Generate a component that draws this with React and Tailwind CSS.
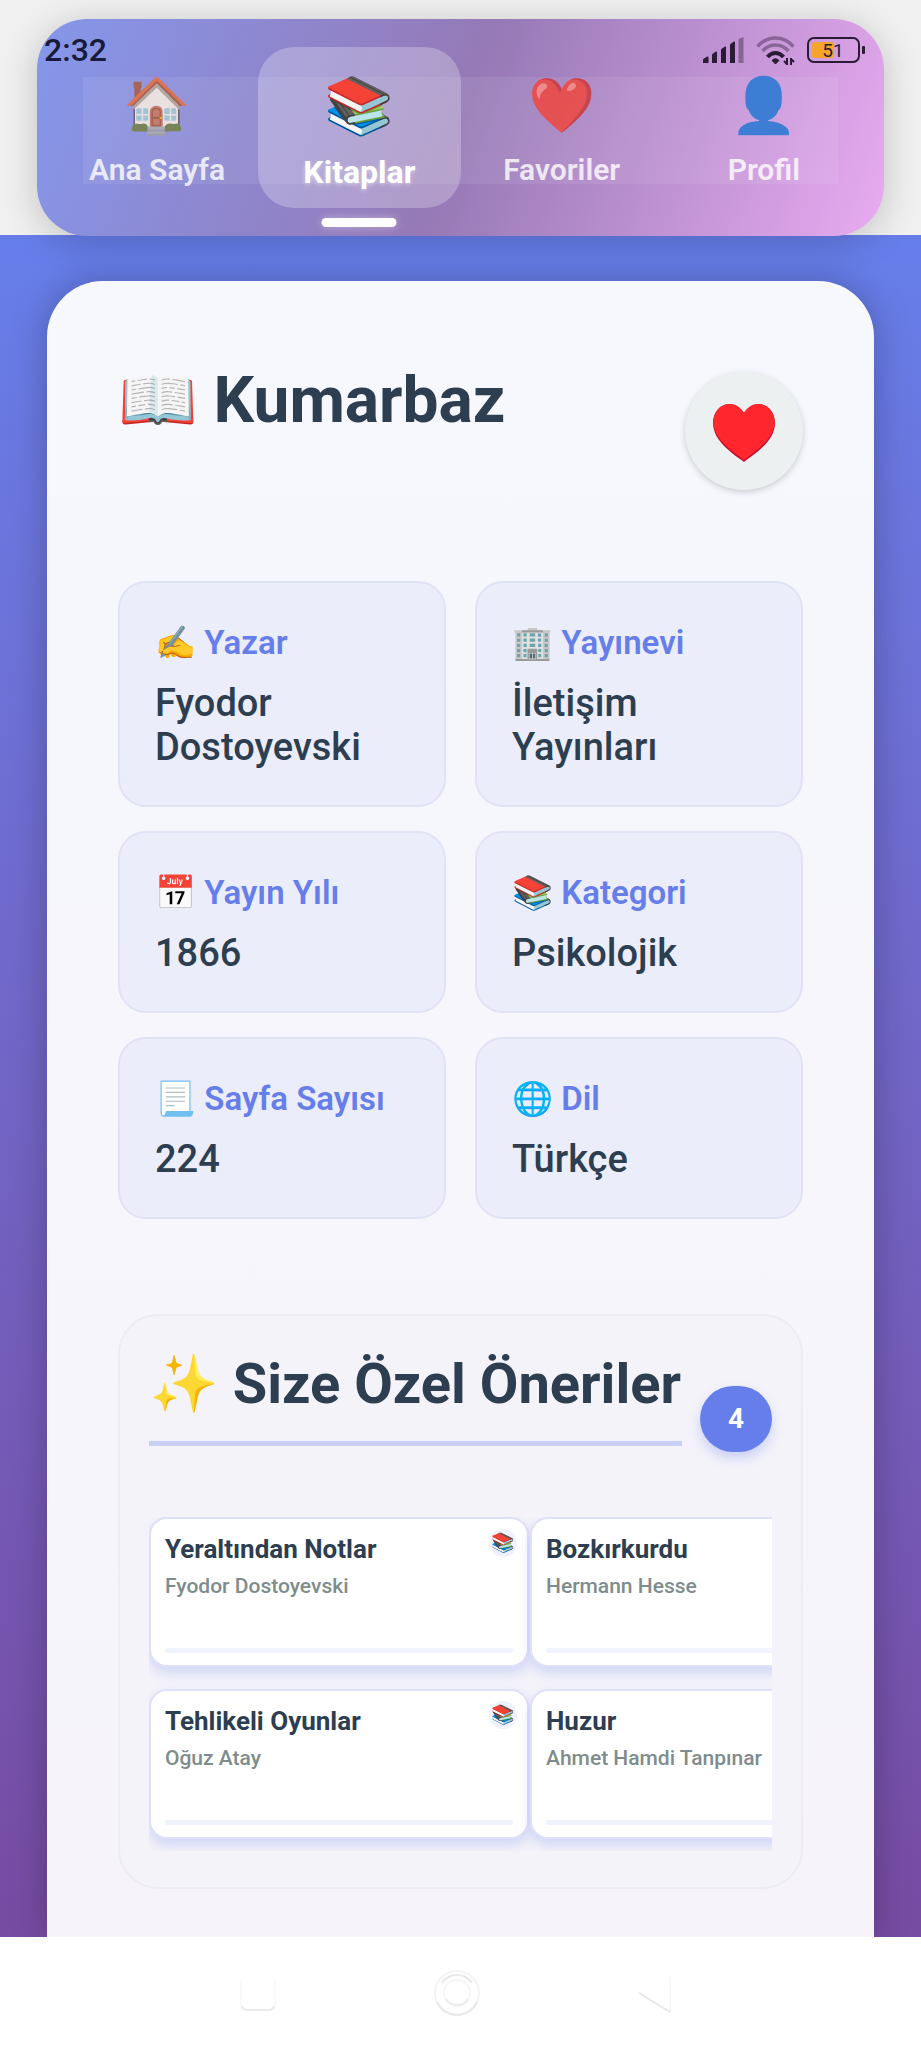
const tabs = [
  { icon: "🏠", label: "Ana Sayfa" },
  { icon: "📚", label: "Kitaplar", active: true },
  { icon: "❤️", label: "Favoriler" },
  { icon: "👤", label: "Profil" },
];

const details = [
  { icon: "✍️", label: "Yazar", value: "Fyodor Dostoyevski" },
  { icon: "🏢", label: "Yayınevi", value: "İletişim Yayınları" },
  { icon: "📅", label: "Yayın Yılı", value: "1866" },
  { icon: "📚", label: "Kategori", value: "Psikolojik" },
  { icon: "📃", label: "Sayfa Sayısı", value: "224" },
  { icon: "🌐", label: "Dil", value: "Türkçe" },
];

const books = [
  { title: "Yeraltından Notlar", author: "Fyodor Dostoyevski", badge: "📚" },
  { title: "Bozkırkurdu", author: "Hermann Hesse" },
  { title: "Tehlikeli Oyunlar", author: "Oğuz Atay", badge: "📚" },
  { title: "Huzur", author: "Ahmet Hamdi Tanpınar" },
];

function StatusBar() {
  return (
    <div className="pointer-events-none absolute inset-x-0 top-0 flex items-center justify-between pl-11 pr-[55px] pt-8">
      <span className="text-[32px] font-medium leading-9 text-[#171a3a]">2:32</span>
      <div className="flex items-center gap-3">
        <svg className="h-[27px] w-[41px]" viewBox="0 0 41 27" fill="#2b1b35" aria-hidden="true">
          <path d="M0 26v-3q0-1 1-1.600l3.500-1.800q1-.4 1 .8V26zM9 26v-8q0-1 1-1.600l3-1.800q1-.4 1 .8V26zM18 26V13q0-1 1-1.600l3-1.800q1-.4 1 .8V26zM27 26V8q0-1 1-1.600l3-1.800q1-.4 1 .8V26z" />
          <path d="M35.500 26V3q0-1 1-1.600l3-1.200q1-.4 1 .8V26z" opacity=".4" />
        </svg>
        <svg className="h-[29px] w-[39px]" viewBox="0 0 39 29" fill="none" stroke="#2b1b35" aria-hidden="true">
          <path d="M1.500 10.500Q9 2 19.500 2t18 8.500" strokeWidth="3.500" opacity=".4" />
          <path d="M6.500 15Q12 9 19.500 9t13 6" strokeWidth="3.500" opacity=".4" />
          <path d="M11.500 21Q15 17 19.500 17t8 4" strokeWidth="4" />
          <path d="M16 24.500Q19.500 21 23 24.500L19.500 28z" fill="#2b1b35" strokeWidth="1" />
          <path d="M31 22v7M35 22v7M28 25l3 3M35 23l3 3" strokeWidth="2" />
        </svg>
        <svg className="h-[26px] w-[59px]" viewBox="0 0 59 26" role="img" aria-label="51%">
          <rect x="1" y="1" width="51" height="24" rx="6" fill="none" stroke="#2b1b35" strokeWidth="2" />
          <rect x="5" y="5" width="22" height="16" rx="2" fill="#f5a52c" />
          <rect x="55" y="9" width="3" height="8" rx="1" fill="#2b1b35" />
          <text x="26" y="20" textAnchor="middle" fontSize="19" fill="#2b1b35">51</text>
        </svg>
      </div>
    </div>
  );
}

function Tab({ icon, label, active }) {
  if (active) {
    return (
      <a href="#" aria-current="page" className="relative flex h-[161px] flex-1 flex-col items-center rounded-[36px] bg-white/25 pt-6 font-bold text-white">
        <span className="text-[56px] leading-[70px]">{icon}</span>
        <span className="mt-2 text-[32px] leading-[46px] [text-shadow:0_2px_4px_rgba(255,255,255,0.4)]">{label}</span>
        <span className="absolute left-1/2 top-[171px] h-[9px] w-[75px] -translate-x-1/2 rounded-full bg-white shadow-[0_0_10px_rgba(255,255,255,0.4)]" />
      </a>
    );
  }
  return (
    <a href="#" className="flex h-[161px] flex-1 flex-col items-center pt-6 font-semibold text-white/80">
      <span className="text-[54px] leading-[70px] text-black opacity-80">{icon}</span>
      <span className="mt-2 text-[30px] leading-[42px]">{label}</span>
    </a>
  );
}

function DetailCard({ icon, label, value }) {
  return (
    <div className="rounded-[28px] border-2 border-[#e0e2f5] bg-[#ecedfa] px-[35px] py-9">
      <dt className="text-[33px] font-semibold leading-[48px] text-[#667eea]">{icon} {label}</dt>
      <dd className="mt-[14px] text-[38px] font-medium leading-[44px]">{value}</dd>
    </div>
  );
}

function BookCard({ title, author, badge }) {
  return (
    <li className="relative flex h-[150px] flex-col rounded-[18px] border-2 border-[#dfe1f8] bg-white px-[14px] pb-3 pt-[14px] shadow-[0_6px_12px_rgba(102,126,234,0.25)]">
      <h3 className="text-[26px] font-bold leading-8">{title}</h3>
      <p className="mt-2 text-[21px] font-medium leading-[26px] text-[#7f8c8d]">{author}</p>
      <div className="mt-auto h-[5px] rounded-full bg-[#f0f2fd]" />
      {badge && (
        <span className="absolute right-2.5 top-2.5 flex size-7 items-center justify-center rounded-full bg-[#667eea]/10 text-[19px]">{badge}</span>
      )}
    </li>
  );
}

export default function App() {
  return (
    <div className="relative flex min-h-screen flex-col bg-white font-[Roboto,'Noto_Color_Emoji',sans-serif] text-[#2c3e50]">
      <header className="relative z-10 h-[235px] bg-[#f0f0f0] px-[37px] pt-[19px]">
        <nav className="relative flex h-[217px] rounded-[50px] bg-[linear-gradient(110deg,#8597eb,#9679b6_50%,#e8abf0)] px-[19px] pt-7 shadow-[0_6px_36px_rgba(0,0,0,0.2)]">
          <div className="pointer-events-none absolute inset-x-[46px] bottom-[52px] top-[58px] bg-white/8" />
          {tabs.map((t) => (
            <Tab key={t.label} {...t} />
          ))}
        </nav>
        <StatusBar />
      </header>

      <main className="flex flex-1 flex-col bg-linear-to-b from-[#667eea] to-[#764ba2] px-[47px] pt-[46px]">
        <article className="flex-1 rounded-t-[56px] bg-linear-to-b from-[#f6f8fe] to-[#f6f4fa] px-[71px] pb-[47px] pt-[84px] shadow-[0_0_36px_rgba(0,0,0,0.25)]">
          <div className="flex items-start justify-between">
            <h1 className="text-[64px] font-bold leading-[72px]">📖 Kumarbaz</h1>
            <button type="button" aria-label="Favorilerden çıkar" className="mt-[7px] flex size-[118px] items-center justify-center rounded-full bg-[#ecf0f1] shadow-[0_2px_6px_rgba(0,0,0,0.18)]">
              <svg className="mt-1 h-[58px] w-[62px]" viewBox="0 0 62 58" aria-hidden="true">
                <path d="M31 58C22 51 0 38 0 19 0 8 7 0 17 0c6 0 11 4 14 9 3-5 8-9 14-9 10 0 17 8 17 19 0 19-22 32-31 39z" fill="#c9102e" />
                <path d="M31 56C23 49 .5 36 .5 18.500.5 8 7 0 17 0c6 0 11 4 14 9 3-5 8-9 14-9 10 0 16.500 8 16.500 18.500C61.500 36 39 49 31 56z" fill="#ff262e" />
              </svg>
            </button>
          </div>

          <dl className="mt-[91px] grid grid-cols-2 gap-x-[29px] gap-y-6">
            {details.map((d) => (
              <DetailCard key={d.label} {...d} />
            ))}
          </dl>

          <section className="mt-[95px] rounded-[40px] border-2 border-[#edecf4] bg-[#f4f3fa] px-[29px] pb-9 pt-[34px]">
            <div className="flex items-start gap-[18px]">
              <h2 className="flex-1 whitespace-nowrap border-b-[5px] border-[#c9d0f6] pb-[23px] text-[56px] font-bold leading-[68px]">✨ Size Özel Öneriler</h2>
              <span className="mt-9 flex h-[66px] w-[72px] items-center justify-center rounded-[33px] bg-[#667eea] text-[28px] font-bold text-white shadow-[0_6px_12px_rgba(102,126,234,0.3)]">4</span>
            </div>
            <ul className="mt-[65px] grid grid-cols-[380px_380px] gap-x-px gap-y-[22px] overflow-x-auto pb-3 [scrollbar-width:none]">
              {books.map((b) => (
                <BookCard key={b.title} {...b} />
              ))}
            </ul>
          </section>
        </article>
      </main>

      <footer className="relative flex h-[111px] items-center justify-center bg-white pr-[7px]">
        <button type="button" aria-label="Son uygulamalar" className="flex w-[198px] justify-center">
          <svg className="h-12 w-12" viewBox="0 0 48 48" fill="none" stroke="#ebebeb" strokeWidth="2">
            <path d="M6 10v27q0 4 4 4h26q4 0 4-4V10" stroke="#f9f9f9" />
            <path d="M7 37q1 4 5 4h22q4 0 5-4" />
          </svg>
        </button>
        <button type="button" aria-label="Ana ekran" className="flex w-[198px] justify-center">
          <svg className="h-12 w-12" viewBox="0 0 48 48" fill="none" strokeWidth="2">
            <circle cx="24" cy="24" r="22" stroke="#f4f4f4" />
            <path d="M4 33a22 22 0 0 0 40 0M9 14a18 18 0 0 1 30 0" stroke="#e9e9e9" />
            <circle cx="24" cy="24" r="13" stroke="#f6f6f6" />
            <path d="M13 30a13 13 0 0 0 22 0" stroke="#ececec" />
          </svg>
        </button>
        <button type="button" aria-label="Geri" className="flex w-[198px] justify-center">
          <svg className="h-12 w-12" viewBox="0 0 48 48" fill="none" stroke="#e8e8e8" strokeWidth="2">
            <path d="M39 8v34" stroke="#f7f7f7" />
            <path d="M8 24l31 19" />
          </svg>
        </button>
      </footer>
    </div>
  );
}
